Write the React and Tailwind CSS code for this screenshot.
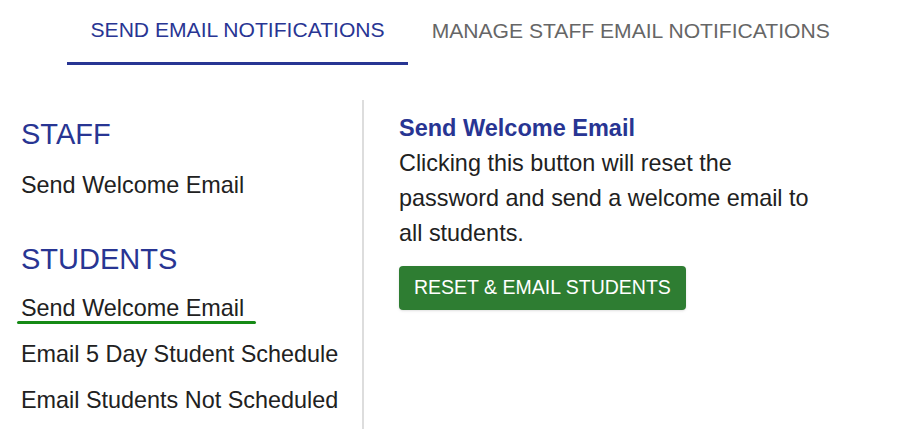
import { useState } from "react";

const STAFF_ITEMS = ["Send Welcome Email"];
const STUDENT_ITEMS = [
  "Send Welcome Email",
  "Email 5 Day Student Schedule",
  "Email Students Not Scheduled",
];

function Tab({ label, active, onClick }) {
  return (
    <button
      type="button"
      onClick={onClick}
      className={`flex h-[65px] items-center px-[23.5px] pb-[3px] text-[21.1px] uppercase ${
        active ? "border-b-[3px] border-[#283593] pb-0 text-[#283593]" : "text-[#666666]"
      }`}
    >
      {label}
    </button>
  );
}

function NavLink({ label, selected, onClick }) {
  return (
    <div className="h-[46px] leading-[46px]">
      <button type="button" onClick={onClick} className="relative text-[23.4px] text-[#212121]">
        {label}
        {selected && (
          <span className="absolute -left-[4px] -right-[12px] bottom-[7px] h-[3px] rounded-full bg-[#168a16]" />
        )}
      </button>
    </div>
  );
}

export default function App() {
  const [tab, setTab] = useState(0);
  const [selected, setSelected] = useState("students-0");

  return (
    <div className="min-h-[446px] w-full bg-white font-['Liberation_Sans',Arial,sans-serif] text-[#212121]">
      <div className="flex pl-[67px]">
        <Tab label="Send Email Notifications" active={tab === 0} onClick={() => setTab(0)} />
        <Tab label="Manage Staff Email Notifications" active={tab === 1} onClick={() => setTab(1)} />
      </div>

      <div className="mt-[35px] flex">
        <div className="w-[364px] border-r-2 border-[#dddddd] pb-[6px] pl-[21px] pt-[17px]">
          <h2 className="text-[29px] leading-[34px] text-[#283593]">STAFF</h2>
          <div className="mt-[11px]">
            {STAFF_ITEMS.map((item, i) => (
              <NavLink
                key={item}
                label={item}
                selected={selected === `staff-${i}`}
                onClick={() => setSelected(`staff-${i}`)}
              />
            ))}
          </div>

          <h2 className="mt-[33.5px] text-[29px] leading-[34px] text-[#283593]">STUDENTS</h2>
          <div className="mt-[9.5px]">
            {STUDENT_ITEMS.map((item, i) => (
              <NavLink
                key={item}
                label={item}
                selected={selected === `students-${i}`}
                onClick={() => setSelected(`students-${i}`)}
              />
            ))}
          </div>
        </div>

        <div className="w-[470px] pl-[35px] pt-[10.5px]">
          <h3 className="text-[23.5px] font-bold leading-[35px] text-[#283593]">Send Welcome Email</h3>
          <p className="text-[23.4px] leading-[35px]">
            Clicking this button will reset the password and send a welcome email to all students.
          </p>
          <button
            type="button"
            className="mt-[15.5px] h-[44px] rounded-[4px] bg-[#2e7d32] px-[15px] text-[19.5px] uppercase text-white shadow-sm"
          >
            Reset &amp; Email Students
          </button>
        </div>
      </div>
    </div>
  );
}
